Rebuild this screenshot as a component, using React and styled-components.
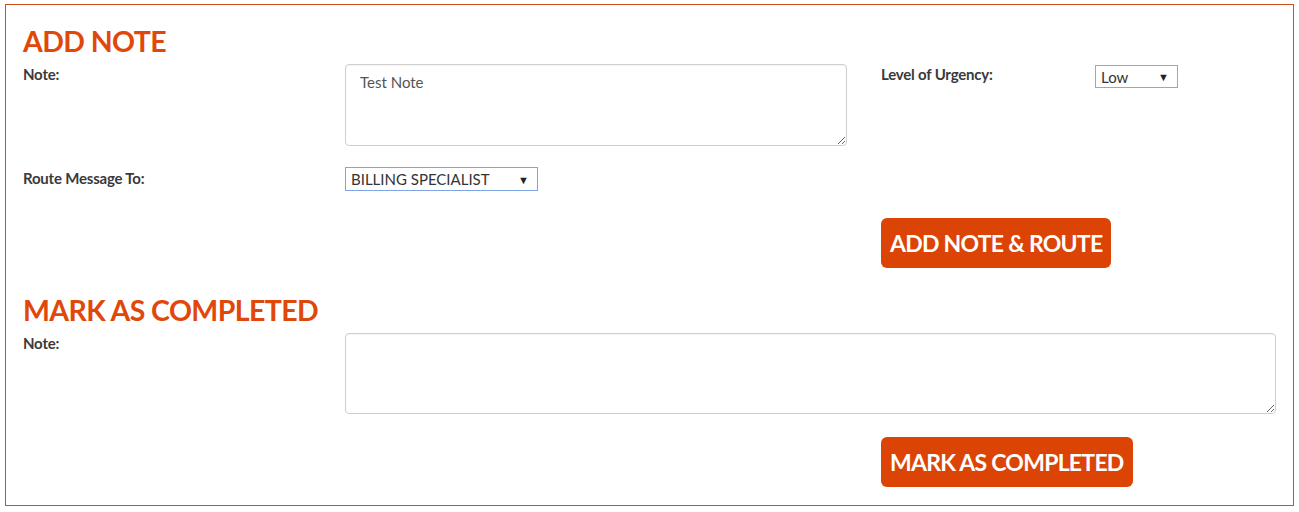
import React, { useState } from "react";
import styled, { createGlobalStyle } from "styled-components";

const GlobalStyle = createGlobalStyle`
  body {
    margin: 0;
    background: #fff;
    font-family: Lato, "Open Sans", sans-serif;
  }
`;

const Panel = styled.div`
  box-sizing: border-box;
  width: 1289px;
  height: 502px;
  margin: 4px 0 0 5px;
  padding: 18px 17px 18px;
  border: 1px solid #d0501a;
  background: #fff;
`;

const Section = styled.section`
  margin-top: ${(p) => p.$top || 0}px;
`;

const Heading = styled.h2`
  margin: 0 0 5px;
  font-size: 28.5px;
  line-height: 36px;
  font-weight: 700;
  letter-spacing: -0.6px;
  color: #e0480a;
`;

const FormGrid = styled.div`
  display: grid;
  grid-template-columns: 322px 536px 214px 1fr;
  align-items: start;
`;

const Row = styled.div`
  display: contents;
`;

const Label = styled.label`
  display: block;
  margin-top: ${(p) => p.$offset || 0}px;
  font-size: 15px;
  line-height: 20px;
  font-weight: 700;
  letter-spacing: -0.2px;
  color: #3a3a3a;
`;

const Cell = styled.div`
  grid-column: ${(p) => p.$span || "auto"};
  margin-top: ${(p) => p.$top || 0}px;
  padding-right: ${(p) => p.$pad || 0}px;
`;

const NoteArea = styled.textarea`
  box-sizing: border-box;
  display: block;
  width: 100%;
  height: ${(p) => p.$h}px;
  padding: 7px 14px;
  border: 1px solid #cfcfcf;
  border-radius: 4px;
  box-shadow: inset 0 1px 1px rgba(0, 0, 0, 0.05);
  font-family: Lato, sans-serif;
  font-size: 15px;
  line-height: 20px;
  color: #555;
  outline: none;
`;

const SelectBox = styled.div`
  box-sizing: border-box;
  display: flex;
  align-items: center;
  width: ${(p) => p.$w}px;
  height: ${(p) => p.$h}px;
  margin-top: ${(p) => p.$top || 0}px;
  padding: 0 8px 0 5px;
  border: 1px solid ${(p) => (p.$focus ? "#7ea6e6" : "#a6a6a6")};
  background: #fff;
`;

const NativeSelect = styled.select`
  flex: 1;
  min-width: 0;
  appearance: none;
  -webkit-appearance: none;
  border: none;
  outline: none;
  background: transparent;
  padding: 0;
  font-family: Lato, sans-serif;
  font-size: 15px;
  color: #333;
`;

const Arrow = styled.span`
  font-size: 11px;
  color: #222;
  line-height: 1;
`;

const ActionButton = styled.button`
  display: inline-block;
  height: 50px;
  padding: 0 9px;
  border: none;
  border-radius: 6px;
  background: #dc4406;
  color: #fff;
  font-family: Lato, sans-serif;
  font-size: 23px;
  font-weight: 700;
  letter-spacing: -0.75px;
  cursor: pointer;
`;

const Dropdown = ({ value, options, onChange, w, h, top, focus }) => (
  <SelectBox $w={w} $h={h} $top={top} $focus={focus}>
    <NativeSelect value={value} onChange={(e) => onChange(e.target.value)}>
      {options.map((o) => (
        <option key={o}>{o}</option>
      ))}
    </NativeSelect>
    <Arrow>▼</Arrow>
  </SelectBox>
);

export default function App() {
  const [note, setNote] = useState("Test Note");
  const [urgency, setUrgency] = useState("Low");
  const [route, setRoute] = useState("BILLING SPECIALIST");
  const [doneNote, setDoneNote] = useState("");

  return (
    <>
      <GlobalStyle />
      <Panel>
        <Section>
          <Heading>ADD NOTE</Heading>
          <FormGrid>
            <Row>
              <Label>Note:</Label>
              <Cell $pad={34}>
                <NoteArea
                  $h={82}
                  value={note}
                  onChange={(e) => setNote(e.target.value)}
                />
              </Cell>
              <Label>Level of Urgency:</Label>
              <Cell>
                <Dropdown
                  w={83}
                  h={23}
                  top={1}
                  value={urgency}
                  options={["Low", "Medium", "High"]}
                  onChange={setUrgency}
                />
              </Cell>
            </Row>
            <Row>
              <Cell $top={21}>
                <Label $offset={1}>Route Message To:</Label>
              </Cell>
              <Cell $top={21} $span="2 / span 3">
                <Dropdown
                  w={193}
                  h={24}
                  focus
                  value={route}
                  options={["BILLING SPECIALIST", "FRONT DESK", "PHYSICIAN"]}
                  onChange={setRoute}
                />
              </Cell>
            </Row>
            <Row>
              <Cell $top={27} $span="3 / span 2">
                <ActionButton type="button">ADD NOTE &amp; ROUTE</ActionButton>
              </Cell>
            </Row>
          </FormGrid>
        </Section>

        <Section $top={24}>
          <Heading>MARK AS COMPLETED</Heading>
          <FormGrid>
            <Row>
              <Label>Note:</Label>
              <Cell $span="2 / span 3">
                <NoteArea
                  $h={81}
                  value={doneNote}
                  onChange={(e) => setDoneNote(e.target.value)}
                />
              </Cell>
            </Row>
            <Row>
              <Cell $top={23} $span="3 / span 2">
                <ActionButton type="button">MARK AS COMPLETED</ActionButton>
              </Cell>
            </Row>
          </FormGrid>
        </Section>
      </Panel>
    </>
  );
}
